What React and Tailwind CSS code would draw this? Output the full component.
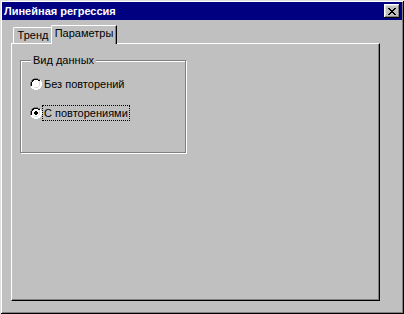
import React from 'react';

const FONT = { fontFamily: '"Liberation Sans", Arial, sans-serif' };

function Radio({ checked }) {
  return (
    <svg width="12" height="12" viewBox="0 0 12 12" className="shrink-0">
      <path d="M4 0h4v1h2v1h1v2h1v4h-1v2h-1v1h-2v1h-4v-1h-2v-1h-1v-2h-1v-4h1v-2h1v-1h2z" fill="#ffffff" />
      <path d="M4 0h4v1h2v1h-2v-1h-4v1h-2v2h-1v4h-1v-4h1v-2h1v-1h2z" fill="#808080" />
      <path d="M4 1h4v1h2v1h-2v-1h-4v1h-1v1h-1v4h-1v-4h1v-2h1v-1h1z" fill="#000000" />
      <path d="M10 2h1v2h1v4h-1v2h-1v1h-2v1h-4v-1h4v-1h2v-2h1v-4h-1z" fill="#ffffff" />
      <path d="M9 3h1v5h-1v1h-1v1h-4v-1h4v-1h1z" fill="#dfdfdf" />
      {checked && <path d="M5 4h2v1h1v2h-1v1h-2v-1h-1v-2h1z" fill="#000000" />}
    </svg>
  );
}

export default function App() {
  return (
    <div
      className="w-[404px] h-[314px] bg-[#c0c0c0] p-[2px] flex flex-col text-[11px] text-black shadow-[inset_1px_1px_0_#dfdfdf,inset_-1px_-1px_0_#000,inset_2px_2px_0_#fff,inset_-2px_-2px_0_#808080]"
      style={FONT}
    >
      <div className="h-[18px] bg-[#000080] flex items-center justify-between pl-[2px] pr-[2px]">
        <span className="text-white font-bold text-[11px] leading-none">Линейная регрессия</span>
        <button className="w-[16px] h-[14px] bg-[#c0c0c0] flex items-center justify-center shadow-[inset_-1px_-1px_0_#000,inset_1px_1px_0_#fff,inset_-2px_-2px_0_#808080,inset_2px_2px_0_#dfdfdf]">
          <svg width="8" height="7" viewBox="0 0 8 7">
            <path d="M0 0h2v1h1v1h2v-1h1v-1h2v1h-1v1h-1v1h-1v1h1v1h1v1h1v1h-2v-1h-1v-1h-2v1h-1v1h-2v-1h1v-1h1v-1h1v-1h-1v-1h-1v-1h-1z" fill="#000" />
          </svg>
        </button>
      </div>

      <div className="flex-1 flex flex-col mt-[5px] ml-[9px] mr-[22px] mb-[11px]">
        <div className="h-[18px] flex items-end pl-[2px]">
          <div className="h-[16px] w-[39px] flex items-center justify-center border-t border-l border-white shadow-[inset_-1px_0_0_#808080] rounded-tl-[2px] mr-[-1px]">
            <span className="leading-none pb-[1px]">Тренд</span>
          </div>
          <div className="relative z-10 h-[19px] w-[66px] mb-[-1px] bg-[#c0c0c0] flex items-start justify-center pt-[2px] border-t border-l border-white border-r border-r-black shadow-[inset_-1px_0_0_#808080] rounded-tl-[2px]">
            <span className="leading-none">Параметры</span>
          </div>
        </div>

        <div className="flex-1 border-t border-l border-white border-r border-b border-r-black border-b-black shadow-[inset_-1px_-1px_0_#808080]">
          <div className="relative ml-[8px] mt-[16px] w-[166px] h-[93px] border border-[#808080] shadow-[inset_1px_1px_0_#fff,1px_1px_0_#fff]">
            <span className="absolute left-[10px] top-[-7px] px-[2px] bg-[#c0c0c0] leading-[13px]">Вид данных</span>
            <div className="flex flex-col gap-[13px] pl-[9px] pt-[15px]">
              <div className="h-[16px] flex items-center">
                <Radio checked={false} />
                <span className="ml-[0px] px-[1px] border border-transparent leading-[14px]">Без повторений</span>
              </div>
              <div className="h-[16px] flex items-center">
                <Radio checked />
                <span className="ml-[0px] px-[1px] border border-dotted border-black leading-[14px]">С повторениями</span>
              </div>
            </div>
          </div>
        </div>
      </div>
    </div>
  );
}
